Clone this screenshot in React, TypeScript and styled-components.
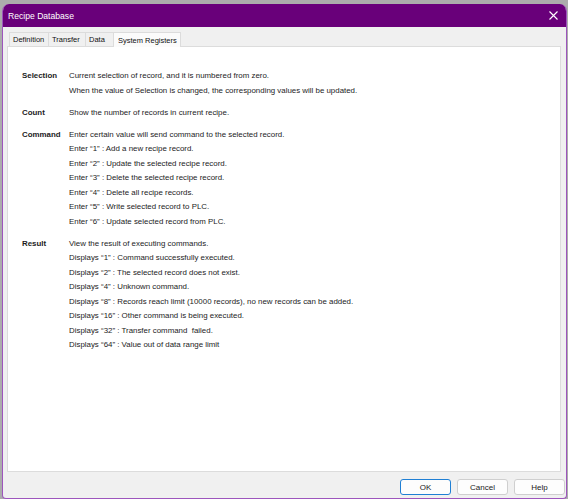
import React from "react";
import styled, { createGlobalStyle } from "styled-components";

const Global = createGlobalStyle`
  html, body { margin: 0; padding: 0; background: #acacac; }
  body { width: 568px; height: 499px; overflow: hidden; font-family: "Liberation Sans", Arial, sans-serif; }
`;

const Window = styled.div`
  box-sizing: border-box;
  margin: 4px 1px 0 2px;
  width: 565px;
  height: 495px;
  display: flex;
  flex-direction: column;
  background: #f0f0f0;
  border: 1.5px solid #9d55bd;
  border-top: none;
  border-radius: 7px 7px 4px 4px;
  overflow: hidden;
`;

const TitleBar = styled.div`
  height: 23px;
  flex: none;
  background: #69007a;
  display: flex;
  align-items: center;
  justify-content: space-between;
  padding: 0 7px 0 5px;
  color: #ffffff;
  font-size: 8.6px;
`;

const CloseBtn = styled.div`
  width: 12px;
  height: 12px;
  display: flex;
  align-items: center;
  justify-content: center;
`;

const Body = styled.div`
  flex: 1;
  display: flex;
  flex-direction: column;
  padding: 4px 2px 3px 5px;
  min-height: 0;
`;

const TabRow = styled.div`
  display: flex;
  align-items: flex-end;
  height: 15px;
  flex: none;
  padding-left: 2px;
`;

const Tab = styled.div<{ $active?: boolean; $w: number }>`
  box-sizing: border-box;
  width: ${(p) => p.$w}px;
  height: ${(p) => (p.$active ? 15 : 14)}px;
  padding-left: ${(p) => (p.$active ? 4 : 3)}px;
  display: flex;
  align-items: center;
  font-size: 7.5px;
  color: #111;
  background: ${(p) => (p.$active ? "#fbfbfb" : "#f0f0f0")};
  border: 1px solid #dcdcdc;
  border-bottom: none;
  margin-left: -1px;
  margin-bottom: ${(p) => (p.$active ? -1 : 0)}px;
  position: relative;
  z-index: ${(p) => (p.$active ? 2 : 1)};
`;

const Panel = styled.div`
  flex: 1;
  box-sizing: border-box;
  margin-right: 3px;
  margin-left: -1px;
  background: #ffffff;
  border: 1px solid #dcdcdc;
  padding: 22px 0 0 14px;
  font-size: 7.9px;
  color: #1c1c1c;
`;

const Group = styled.div`
  display: grid;
  grid-template-columns: 47px 1fr;
  margin-bottom: 7.5px;
`;

const Label = styled.div`
  font-weight: bold;
  line-height: 14.5px;
`;

const Lines = styled.div`
  display: flex;
  flex-direction: column;
`;

const Line = styled.div`
  line-height: 14.5px;
  white-space: pre;
`;

const ButtonRow = styled.div`
  flex: none;
  display: flex;
  justify-content: flex-end;
  gap: 6px;
  padding-top: 7px;
  margin-right: -1px;
`;

const Button = styled.div<{ $primary?: boolean }>`
  box-sizing: border-box;
  width: 51px;
  height: 16px;
  border-radius: 3px;
  background: #fdfdfd;
  border: 1px solid ${(p) => (p.$primary ? "#1f7fd4" : "#cfcfcf")};
  display: flex;
  align-items: center;
  justify-content: center;
  font-size: 8px;
  color: #1a1a1a;
`;

const groups: { label: string; lines: string[] }[] = [
  {
    label: "Selection",
    lines: [
      "Current selection of record, and it is numbered from zero.",
      "When the value of Selection is changed, the corresponding values will be updated.",
    ],
  },
  { label: "Count", lines: ["Show the number of records in current recipe."] },
  {
    label: "Command",
    lines: [
      "Enter certain value will send command to the selected record.",
      "Enter \u201c1\u201d : Add a new recipe record.",
      "Enter \u201c2\u201d : Update the selected recipe record.",
      "Enter \u201c3\u201d : Delete the selected recipe record.",
      "Enter \u201c4\u201d : Delete all recipe records.",
      "Enter \u201c5\u201d : Write selected record to PLC.",
      "Enter \u201c6\u201d : Update selected record from PLC.",
    ],
  },
  {
    label: "Result",
    lines: [
      "View the result of executing commands.",
      "Displays \u201c1\u201d : Command successfully executed.",
      "Displays \u201c2\u201d : The selected record does not exist.",
      "Displays \u201c4\u201d : Unknown command.",
      "Displays \u201c8\u201d : Records reach limit (10000 records), no new records can be added.",
      "Displays \u201c16\u201d : Other command is being executed.",
      "Displays \u201c32\u201d : Transfer command  failed.",
      "Displays \u201c64\u201d : Value out of data range limit",
    ],
  },
];

const tabs = [
  { name: "Definition", w: 40 },
  { name: "Transfer", w: 38 },
  { name: "Data", w: 29 },
  { name: "System Registers", w: 68, active: true },
];

export default function App() {
  return (
    <>
      <Global />
      <Window>
        <TitleBar>
          <span>Recipe Database</span>
          <CloseBtn>
            <svg width="9" height="9" viewBox="0 0 9 9">
              <path d="M0.5 0.5 L8.5 8.5 M8.5 0.5 L0.5 8.5" stroke="#fff" strokeWidth="1.1" />
            </svg>
          </CloseBtn>
        </TitleBar>
        <Body>
          <TabRow>
            {tabs.map((t) => (
              <Tab key={t.name} $w={t.w} $active={t.active}>
                {t.name}
              </Tab>
            ))}
          </TabRow>
          <Panel>
            {groups.map((g) => (
              <Group key={g.label}>
                <Label>{g.label}</Label>
                <Lines>
                  {g.lines.map((l) => (
                    <Line key={l}>{l}</Line>
                  ))}
                </Lines>
              </Group>
            ))}
          </Panel>
          <ButtonRow>
            <Button $primary>OK</Button>
            <Button>Cancel</Button>
            <Button>Help</Button>
          </ButtonRow>
        </Body>
      </Window>
    </>
  );
}
